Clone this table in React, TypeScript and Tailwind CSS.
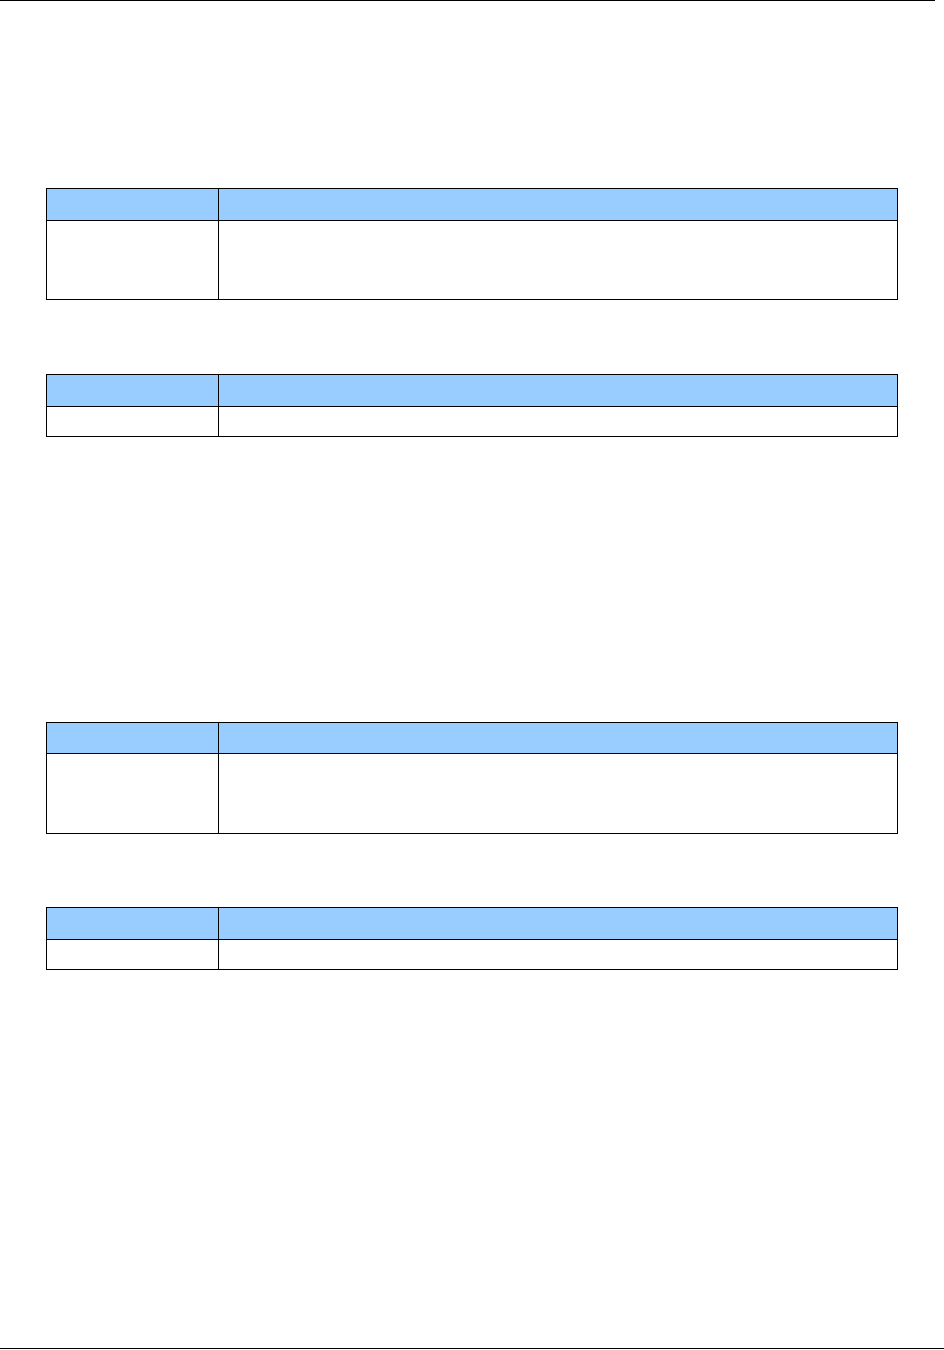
type SpecTableProps = {
  headerH: string;
  rowH: string;
  className?: string;
};

function SpecTable({ headerH, rowH, className = '' }: SpecTableProps) {
  return (
    <div className={`ml-[46px] w-[852px] border border-black ${className}`}>
      <div className={`grid grid-cols-[172px_1fr] bg-[#99ccff] border-b border-black ${headerH}`}>
        <div className="border-r border-black" />
        <div />
      </div>
      <div className={`grid grid-cols-[172px_1fr] bg-white ${rowH}`}>
        <div className="border-r border-black" />
        <div />
      </div>
    </div>
  );
}

export default function App() {
  return (
    <div className="w-[944px] h-[1350px] bg-white flex flex-col font-['Liberation_Sans',sans-serif]">
      <div className="w-[935px] h-px bg-black" />

      <SpecTable headerH="h-[32px]" rowH="h-[78px]" className="mt-[187px]" />
      <SpecTable headerH="h-[32px]" rowH="h-[29px]" className="mt-[74px]" />

      <SpecTable headerH="h-[31px]" rowH="h-[79px]" className="mt-[285px]" />
      <SpecTable headerH="h-[32px]" rowH="h-[29px]" className="mt-[73px]" />

      <div className="mt-auto mb-px w-full h-px bg-black" />
    </div>
  );
}
